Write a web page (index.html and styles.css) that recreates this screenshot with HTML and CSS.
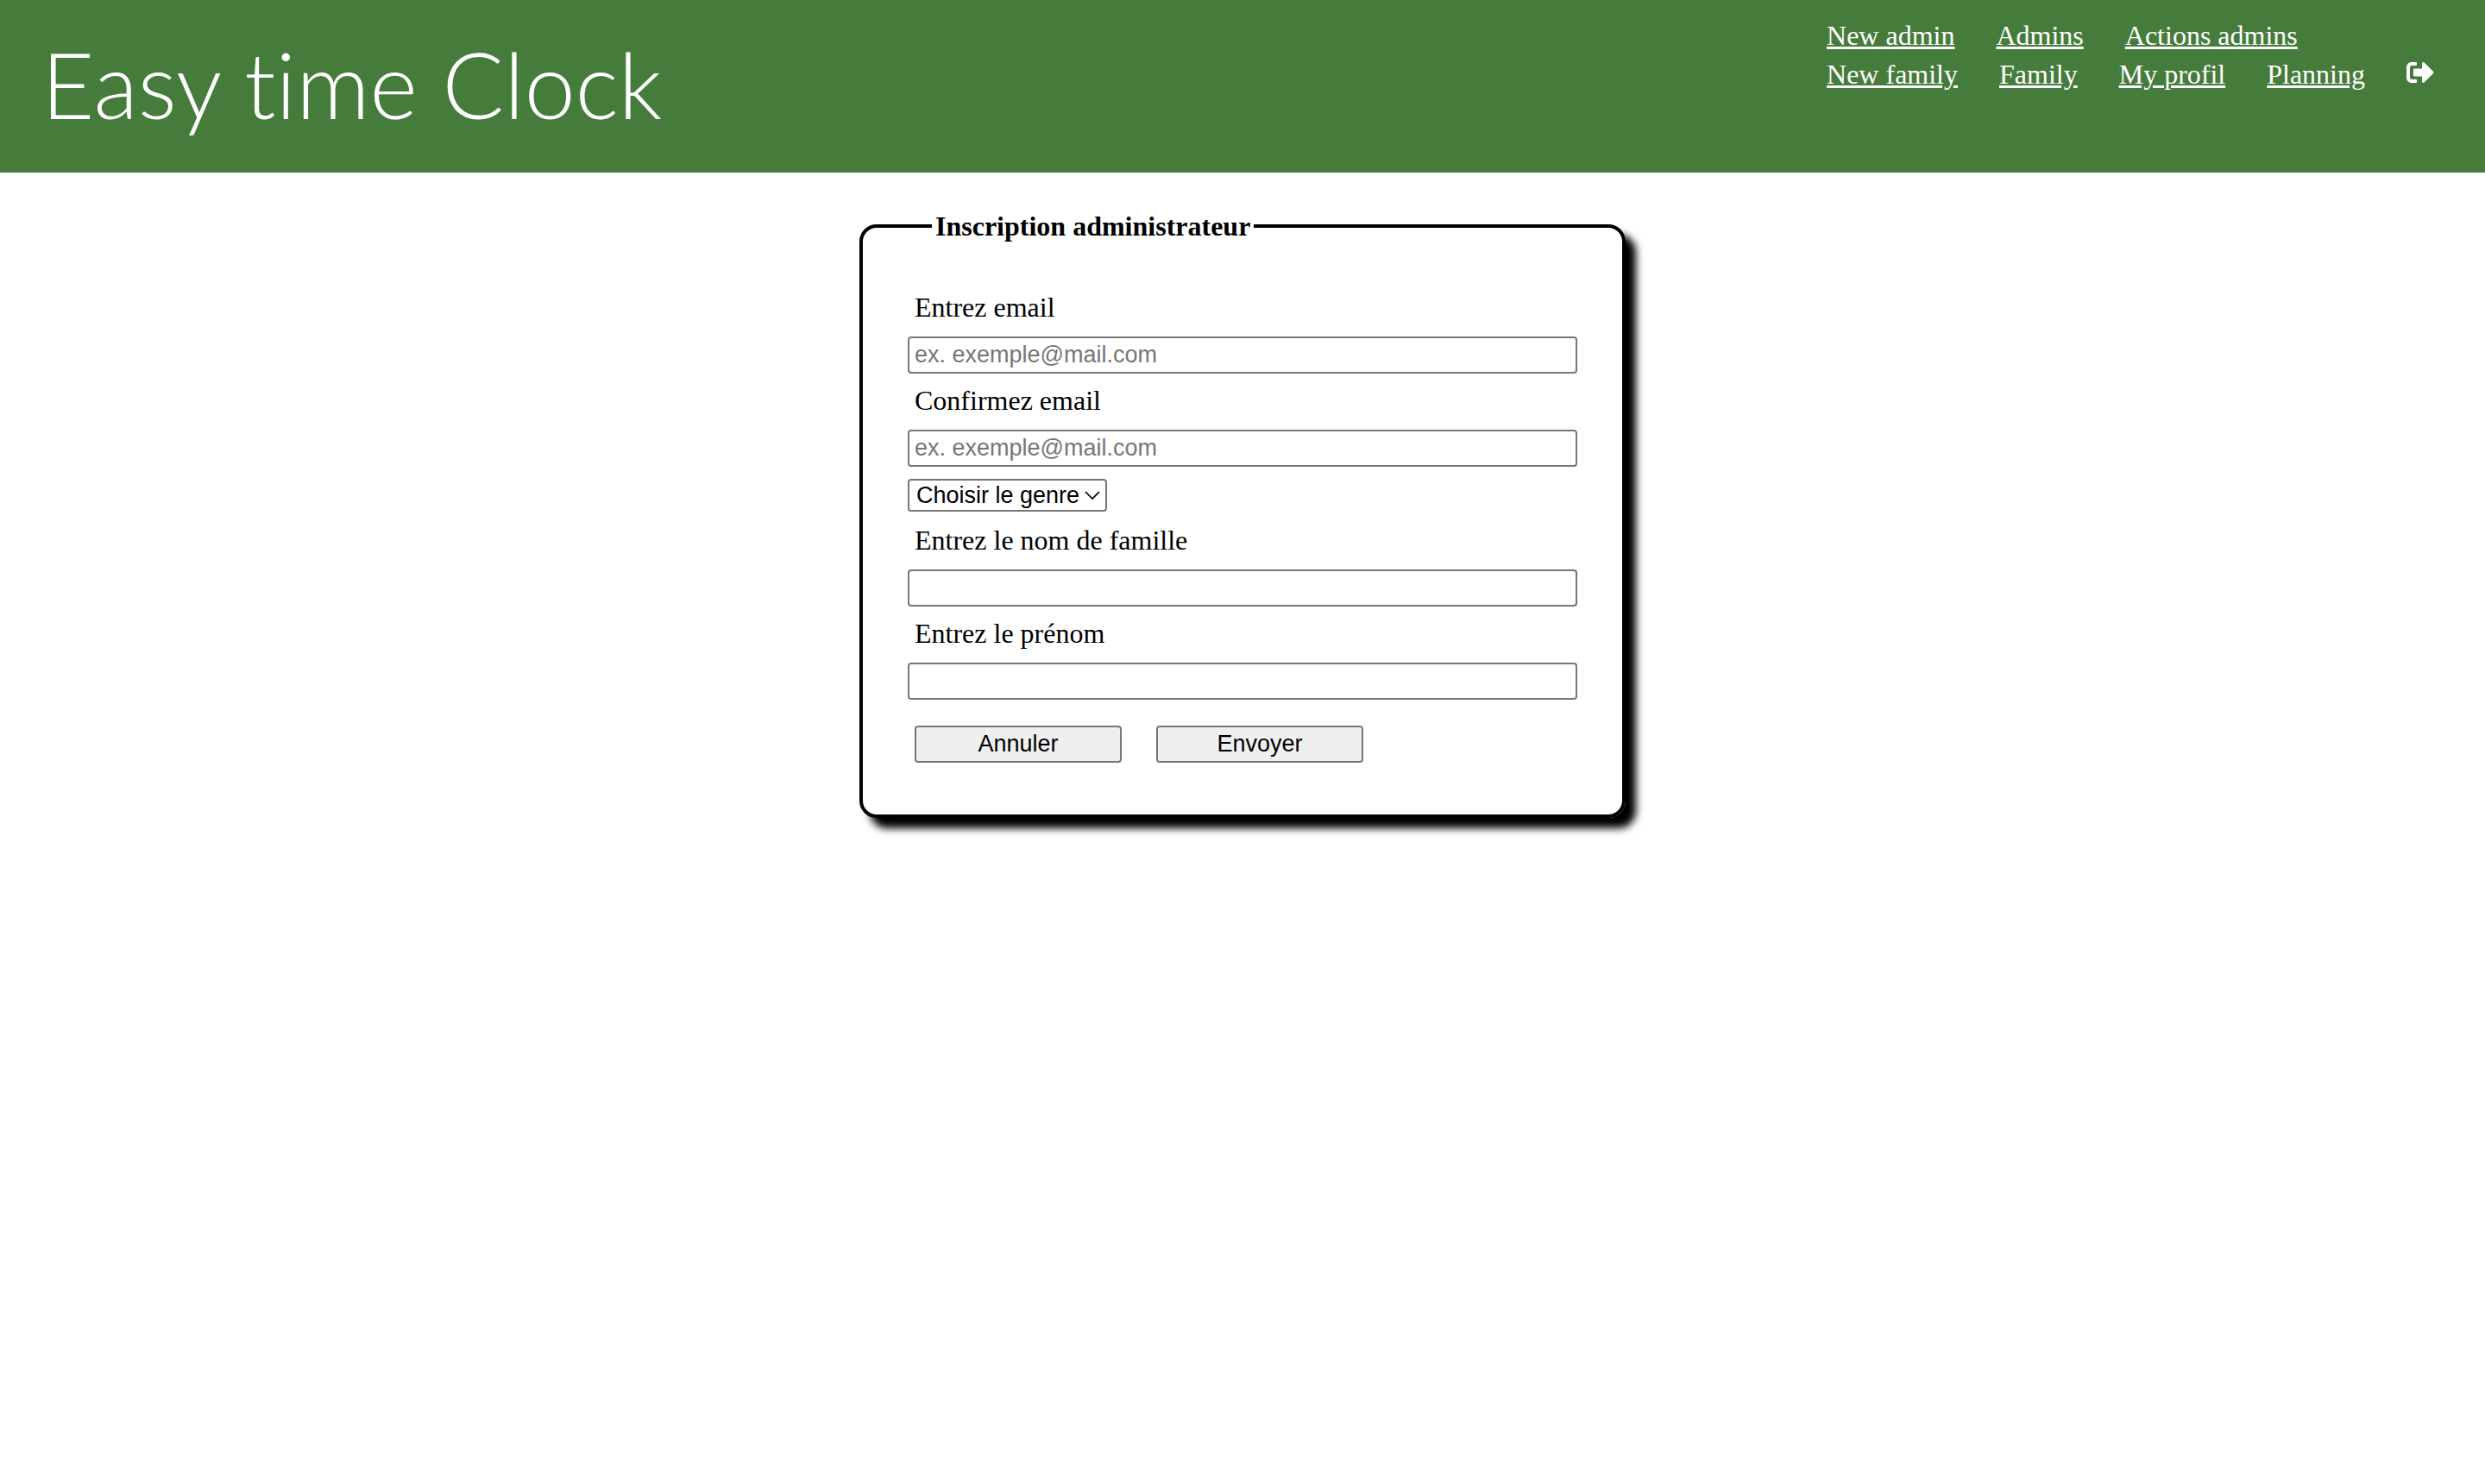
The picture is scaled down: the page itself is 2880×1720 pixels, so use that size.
FILE: index.html
```html
<!DOCTYPE html>
<html lang="fr">
<head>
  <meta charset="utf-8">
  <meta name="viewport" content="width=device-width, initial-scale=1">
  <title>Easy time Clock</title>
  <link rel="stylesheet" href="styles.css">
</head>
<body>
  <header class="header">
    <h1 class="brand">Easy time Clock</h1>
    <nav class="nav">
      <div class="nav-row">
        <a href="#">New admin</a>
        <a href="#">Admins</a>
        <a href="#">Actions admins</a>
      </div>
      <div class="nav-row">
        <a href="#">New family</a>
        <a href="#">Family</a>
        <a href="#">My profil</a>
        <a href="#">Planning</a>
        <a class="logout" href="#" aria-label="Logout">
          <svg viewBox="0 0 512 512" width="32" height="32" fill="currentColor" aria-hidden="true">
            <path d="M497 273L329 441c-15 15-41 4.500-41-17v-96H152c-13.300 0-24-10.700-24-24v-96c0-13.300 10.700-24 24-24h136V88c0-21.400 25.900-32 41-17l168 168c9.300 9.400 9.300 24.600 0 34zM192 436v-40c0-6.600-5.400-12-12-12H96c-17.700 0-32-14.300-32-32V160c0-17.700 14.300-32 32-32h84c6.600 0 12-5.400 12-12V76c0-6.600-5.400-12-12-12H96c-53 0-96 43-96 96v192c0 53 43 96 96 96h84c6.600 0 12-5.400 12-12z"/>
          </svg>
        </a>
      </div>
    </nav>
  </header>
  <main class="main">
    <form class="form">
      <fieldset class="panel">
        <legend>Inscription administrateur</legend>
        <div class="fields">
          <label for="email">Entrez email</label>
          <input id="email" type="email" placeholder="ex. exemple@mail.com">
          <label for="email-confirm">Confirmez email</label>
          <input id="email-confirm" type="email" placeholder="ex. exemple@mail.com">
          <div class="select">
            <select aria-label="Choisir le genre">
              <option>Choisir le genre</option>
            </select>
            <svg class="chevron" viewBox="0 0 18 10" width="18" height="10" fill="none" stroke="currentColor" stroke-width="1.700" aria-hidden="true">
              <path d="M1 1l8 8 8-8"/>
            </svg>
          </div>
          <label for="last-name">Entrez le nom de famille</label>
          <input id="last-name" type="text">
          <label for="first-name">Entrez le prénom</label>
          <input id="first-name" type="text">
        </div>
        <div class="actions">
          <button type="reset">Annuler</button>
          <button type="submit">Envoyer</button>
        </div>
      </fieldset>
    </form>
  </main>
</body>
</html>
```

FILE: styles.css
```css
* {
  box-sizing: border-box;
}

body {
  margin: 0;
  background: #fff;
  color: #000;
  font-family: "Liberation Serif", "Times New Roman", serif;
  font-size: 32px;
  line-height: 36px;
}

.header {
  display: flex;
  justify-content: space-between;
  align-items: flex-start;
  min-height: 200px;
  padding: 23px 59px 36px 48px;
  background: #467c3b;
  color: #fff;
}

.brand {
  margin: 10px 0 0;
  font-family: Lato, sans-serif;
  font-size: 106px;
  font-weight: 300;
  font-variant-ligatures: none;
  line-height: 128px;
}

.nav {
  display: flex;
  flex-direction: column;
  gap: 9px;
}

.nav-row {
  display: flex;
  gap: 48px;
}

.nav a {
  color: inherit;
  text-decoration-thickness: 3px;
}

.logout svg {
  display: block;
}

.main {
  padding: 44px 24px;
}

.form {
  width: 100%;
  max-width: 888px;
  margin: 0 auto;
}

.panel {
  min-width: 0;
  margin: 0;
  padding: 59px 52px 60px;
  border: 4px solid #000;
  border-radius: 20px;
  box-shadow: 12px 12px 10px #000;
}

.panel legend {
  margin-left: 28px;
  padding: 0 4px;
  font-weight: bold;
}

.fields {
  display: flex;
  flex-direction: column;
  gap: 14px;
}

.fields label {
  padding: 0 0 3px 8px;
  line-height: 34px;
}

input,
select,
button {
  margin: 0;
  border: 2px solid #767676;
  border-radius: 4px;
  color: #000;
  font-family: "Liberation Sans", Arial, sans-serif;
  font-size: 27px;
}

input {
  width: 100%;
  height: 43px;
  padding: 0 6px;
  background: #fff;
}

input::placeholder {
  color: #767676;
}

.select {
  position: relative;
  align-self: flex-start;
  margin-bottom: 2px;
}

.select select {
  display: block;
  height: 38px;
  padding: 0 29px 0 8px;
  background: #fff;
  appearance: none;
}

.chevron {
  position: absolute;
  top: 14px;
  right: 8px;
  pointer-events: none;
}

.actions {
  display: flex;
  gap: 40px;
  margin-top: 30px;
  padding-left: 8px;
}

button {
  width: 240px;
  height: 43px;
  padding: 0;
  background: #efefef;
}
```
